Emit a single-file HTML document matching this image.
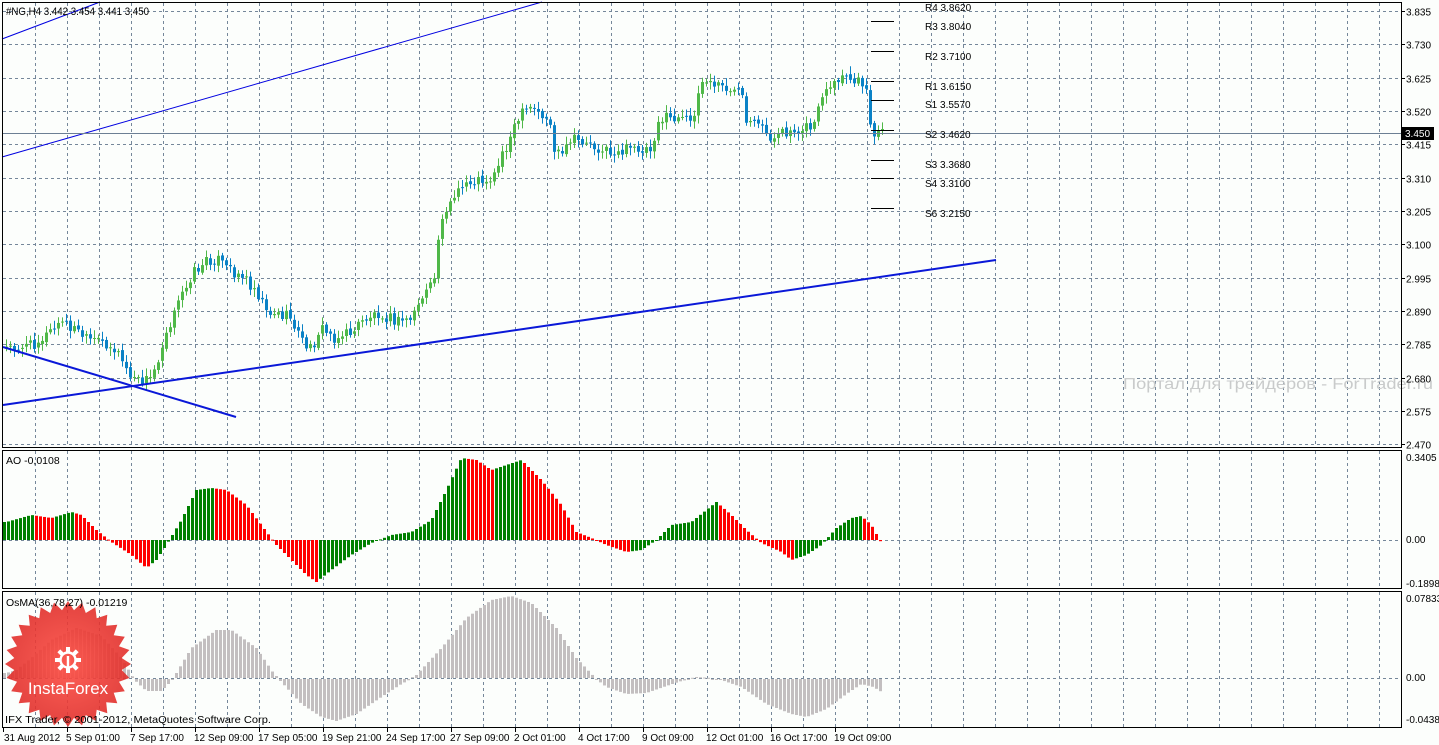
<!DOCTYPE html>
<html><head><meta charset="utf-8"><style>
html,body{margin:0;padding:0;background:#fcfefc;}
svg{display:block;font-family:"Liberation Sans","DejaVu Sans",sans-serif;}
</style></head><body>
<svg id="s" width="1439" height="745" xmlns="http://www.w3.org/2000/svg">
<rect x="0" y="0" width="1439" height="745" fill="#fcfefc"/>
<g id="grid" stroke="#75879a" stroke-width="1" stroke-dasharray="3,3"></g>
<g id="ao"></g>
<g id="osma"></g>
<defs><radialGradient id="rg" cx="50%" cy="50%" r="50%"><stop offset="0" stop-color="#ff5248" stop-opacity="0.92"/><stop offset="1" stop-color="#e02a26" stop-opacity="0.88"/></radialGradient></defs>
<polygon id="star" fill="url(#rg)"/>
<g stroke="#fff" stroke-width="2.4" fill="none">
<circle cx="68" cy="660" r="7.5"/>
<line x1="68" y1="656" x2="68" y2="673"/>
</g>
<g id="gear" fill="#fff"></g>
<text x="68" y="694" text-anchor="middle" font-size="17" fill="#fff">InstaForex</text>
<g id="cand"></g>
<line x1="2" y1="39" x2="100" y2="2" stroke="#0000e0" stroke-width="1"/>
<line x1="2" y1="157" x2="542" y2="2" stroke="#0000e0" stroke-width="1"/>
<line x1="3" y1="405" x2="996" y2="260" stroke="#0a18d8" stroke-width="2"/>
<line x1="3" y1="347" x2="236" y2="417" stroke="#0a18d8" stroke-width="2"/>
<line x1="2" y1="133.5" x2="1401" y2="133.5" stroke="#6c7f94" stroke-width="1"/>
<g id="piv" stroke="#000" stroke-width="1"></g>
<g font-size="10" fill="#000">
<text x="925" y="11">R4 3.8620</text><text x="925" y="30">R3 3.8040</text>
<text x="925" y="60">R2 3.7100</text><text x="925" y="90">R1 3.6150</text>
<text x="925" y="108">S1 3.5570</text><text x="925" y="138">S2 3.4620</text>
<text x="925" y="168">S3 3.3680</text><text x="925" y="187">S4 3.3100</text>
<text x="925" y="217">S6 3.2150</text>
</g>
<text x="1123" y="389" font-size="16" fill="#c9cbcb" textLength="310" lengthAdjust="spacingAndGlyphs">Портал для трейдеров - ForTrader.ru</text>
<g font-size="10.5" fill="#000">
<text x="6" y="15" font-size="11" textLength="143" lengthAdjust="spacingAndGlyphs">#NG,H4  3.442 3.454 3.441 3.450</text>
<text x="6" y="464">AO -0,0108</text>
<text x="6" y="606">OsMA(36,78,27) -0.01219</text>
<text x="5" y="723" textLength="266" lengthAdjust="spacingAndGlyphs">IFX Trader, © 2001-2012, MetaQuotes Software Corp.</text>
</g>
<g fill="none" stroke="#000" stroke-width="1">
<rect x="2.5" y="2.5" width="1399" height="445"/>
<rect x="2.5" y="450.5" width="1399" height="138"/>
<rect x="2.5" y="591.5" width="1399" height="136"/>
</g>
<g id="axis" font-size="10" fill="#000"></g>
<rect x="1402" y="127" width="32" height="13" fill="#000"/>
<text x="1405" y="137" font-size="10" fill="#fff">3.450</text>
</svg>
<script>
(function(){
var NS="http://www.w3.org/2000/svg";
function el(p,t,a,txt){var e=document.createElementNS(NS,t);for(var k in a)e.setAttribute(k,a[k]);if(txt!=null)e.textContent=txt;document.getElementById(p).appendChild(e);return e;}
function interp(kp,x){if(x<=kp[0][0])return kp[0][1];for(var i=1;i<kp.length;i++){if(x<=kp[i][0]){var a=kp[i-1],b=kp[i];return a[1]+(b[1]-a[1])*(x-a[0])/(b[0]-a[0]);}}return kp[kp.length-1][1];}
function rnd(i){var v=Math.sin(i*12.9898+4.1)*43758.5453;return v-Math.floor(v);}
for(var x=35;x<1400;x+=32){el("grid","line",{x1:x+.5,y1:3,x2:x+.5,y2:447});el("grid","line",{x1:x+.5,y1:451,x2:x+.5,y2:588});el("grid","line",{x1:x+.5,y1:592,x2:x+.5,y2:727});}
var prices=["3.835","3.730","3.625","3.520","3.415","3.310","3.205","3.100","2.995","2.890","2.785","2.680","2.575","2.470"];
for(var k=0;k<14;k++){var y=Math.round(11+k*33.33)+.5;el("grid","line",{x1:3,y1:y,x2:1401,y2:y});el("axis","line",{x1:1401,y1:y,x2:1405,y2:y,stroke:"#000"});el("axis","text",{x:1406,y:y+4},prices[k]);}
el("grid","line",{x1:3,y1:540.5,x2:1401,y2:540.5});el("grid","line",{x1:3,y1:678.5,x2:1401,y2:678.5});
[["0.3405",461],["0.00",543],["-0.1898",587],["0.07833",602],["0.00",681],["-0.04383",723]].forEach(function(a){el("axis","text",{x:1406,y:a[1]},a[0]);});
var tl=["31 Aug 2012","5 Sep 01:00","7 Sep 17:00","12 Sep 09:00","17 Sep 05:00","19 Sep 21:00","24 Sep 17:00","27 Sep 09:00","2 Oct 01:00","4 Oct 17:00","9 Oct 09:00","12 Oct 01:00","16 Oct 17:00","19 Oct 09:00"];
for(var i=0;i<tl.length;i++){var tx=3+64*i;el("axis","line",{x1:tx+.5,y1:728,x2:tx+.5,y2:732,stroke:"#000"});el("axis","text",{x:i==0?4:tx-1,y:741},tl[i]);}
var ck=[[5,348],[30,345],[45,335],[60,322],[75,330],[85,340],[105,343],[118,355],[128,375],[135,382],[150,378],[158,355],[165,330],[175,310],[182,290],[192,272],[205,262],[215,258],[225,268],[240,275],[255,290],[268,312],[290,318],[300,340],[310,350],[318,328],[335,338],[350,332],[365,318],[378,312],[395,322],[410,318],[420,298],[432,285],[440,215],[452,200],[465,183],[480,180],[492,178],[500,155],[510,135],[520,115],[530,108],[540,115],[548,120],[553,150],[560,158],[570,140],[585,142],[600,150],[612,153],[625,150],[640,148],[650,148],[657,120],[670,118],[690,122],[700,82],[715,85],[730,90],[740,95],[745,125],[760,128],[772,140],[785,132],[800,127],[812,128],[818,100],[830,90],[840,78],[852,82],[865,85],[868,128],[875,133],[882,132]];
var prev=348;
for(var i=0;i<220;i++){var x=5+4*i;if(x>882)break;var c=interp(ck,x)+(rnd(i)-0.5)*12;var o=prev+(rnd(i+500)-0.5)*3;prev=c;
var tp=Math.min(o,c),bt=Math.max(o,c);if(bt-tp<1)bt=tp+1;var up=c<o;var col=up?"#4fb848":"#0a82c6";
var hi=tp-2-rnd(i+900)*6,lo=bt+2+rnd(i+1300)*6;
el("cand","line",{x1:x+1.5,y1:hi,x2:x+1.5,y2:lo,stroke:col,"stroke-width":1});
el("cand","rect",{x:x,y:tp,width:3,height:bt-tp,fill:col});}
[21,51,81,100,130,160,178,208].forEach(function(y){el("piv","line",{x1:871,y1:y+.5,x2:894,y2:y+.5});});
var ak=[[5,18],[30,25],[50,22],[70,28],[80,25],[95,10],[110,-2],[130,-15],[145,-28],[155,-20],[165,-5],[180,20],[195,50],[210,52],[225,50],[245,35],[260,15],[275,-5],[290,-20],[305,-35],[315,-42],[330,-30],[350,-15],[370,-3],[390,5],[410,8],[430,20],[445,50],[460,82],[475,80],[490,70],[505,75],[520,80],[540,60],[560,35],[575,8],[590,2],[605,-5],[625,-12],[640,-10],[655,0],[670,15],[690,18],[705,30],[715,38],[730,25],[745,10],[760,-3],[780,-12],[790,-20],[805,-15],[820,-5],[835,12],[850,22],[860,24],[870,15],[880,-3]];
var pv=null;
for(var x=3;x<=880;x+=4){var v=interp(ak,x);var col=(pv===null||v>=pv)?"#008000":"#ff0000";pv=v;var h=Math.abs(v);el("ao","rect",{x:x,y:v>0?540-v:540,width:3,height:Math.max(h,1),fill:col});}
var ok=[[5,5],[15,8],[30,20],[50,38],[75,50],[100,42],[120,20],[132,0],[145,-12],[160,-12],[172,0],[190,30],[215,48],[230,48],[255,30],[272,5],[280,-3],[300,-25],[320,-38],[335,-42],[355,-35],[380,-18],[400,-5],[415,3],[440,30],[465,60],[490,78],[510,82],[530,75],[555,50],[575,20],[592,2],[605,-8],[625,-15],[645,-14],[665,-7],[680,-2],[695,1],[710,0],[720,-1],[740,-8],[765,-25],[790,-35],[805,-38],[825,-30],[845,-15],[860,-5],[872,-8],[882,-14]];
for(var x=3;x<=882;x+=4){var v=interp(ok,x);var h=Math.abs(v);el("osma","rect",{x:x,y:v>0?678-v:679,width:3,height:Math.max(h,1),fill:"#c3bfc0"});}
var pts=[];for(var i=0;i<56;i++){var a=i*Math.PI/28;var r=i%2?54:63;pts.push((68+r*Math.sin(a)).toFixed(1)+","+(664-r*Math.cos(a)).toFixed(1));}
document.getElementById("star").setAttribute("points",pts.join(" "));
for(var i=0;i<8;i++){el("gear","rect",{x:66,y:647,width:4,height:5,transform:"rotate("+(i*45)+" 68 660)"});}
})();
</script>
</body></html>
